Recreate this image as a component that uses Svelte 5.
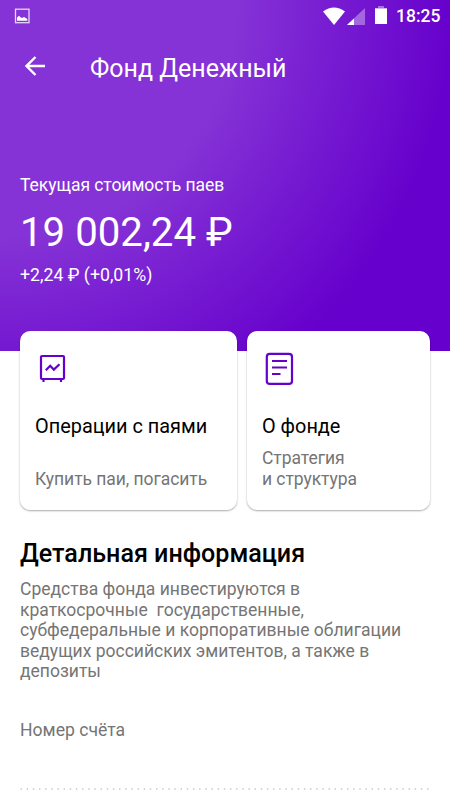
<script lang="ts">
	interface Card {
		icon: 'chart' | 'document';
		title: string;
		lines: string[];
	}

	const fund = {
		name: 'Фонд Денежный',
		value: '19 002,24 ₽',
		change: '+2,24 ₽ (+0,01%)'
	};

	const cards: Card[] = [
		{ icon: 'chart', title: 'Операции с паями', lines: ['Купить паи, погасить'] },
		{ icon: 'document', title: 'О фонде', lines: ['Стратегия', 'и структура'] }
	];

	const description = [
		'Средства фонда инвестируются в',
		'краткосрочные  государственные,',
		'субфедеральные и корпоративные облигации',
		'ведущих российских эмитентов, а также в',
		'депозиты'
	];
</script>

<div class="screen">
	<header class="hero">
		<div class="status-bar">
			<svg class="picture" width="16" height="16" viewBox="0 0 16 16">
				<rect x="1.5" y="1.2" width="13.5" height="13.5" fill="none" stroke="#fff" stroke-opacity="0.8" stroke-width="1.3" />
				<path d="M3 12.8V9.5l2-1.7 1.5 1.4L8 10l2-1 3.3 2v1.8z" fill="#fff" />
			</svg>
			<div class="status-icons">
				<svg class="wifi" width="22" height="18" viewBox="0 0 22 18">
					<path d="M0 4.5Q11-3.5 22 4.5L11 18z" fill="#fff" />
				</svg>
				<svg class="signal" width="18" height="17" viewBox="0 0 18 17">
					<path d="M0 17L18 0v17z" fill="#fff" fill-opacity="0.35" />
					<path d="M0 17l7-6.6V17z" fill="#fff" />
				</svg>
				<svg class="battery" width="12" height="18" viewBox="0 0 12 18">
					<path d="M3 0h6v2h3v1H0V2h3z" fill="#fff" fill-opacity="0.4" />
					<path d="M0 2.5h12V18H0z" fill="#fff" />
				</svg>
				<span class="time">18:25</span>
			</div>
		</div>

		<div class="app-bar">
			<button type="button" class="back" aria-label="Назад">
				<svg width="20" height="20" viewBox="0 0 20 20">
					<path d="M20 10H2M10.5 1L1.5 10l9 9" fill="none" stroke="#fff" stroke-width="2.4" />
				</svg>
			</button>
			<h1>{fund.name}</h1>
		</div>

		<div class="balance">
			<div class="label">Текущая стоимость паев</div>
			<div class="value">{fund.value}</div>
			<div class="change">{fund.change}</div>
		</div>
	</header>

	<div class="cards">
		{#each cards as card}
			<button type="button" class="card">
				<svg class="card-icon" width="32" height="35" viewBox="0 0 32 35" fill="none" stroke="#60c" stroke-width="2.2">
					{#if card.icon === 'chart'}
						<rect x="6" y="5" width="23" height="23" rx="1" />
						<path d="M8.5 28v3M26 28v3M10.8 19.3l4.4-4.5 3.6 3.8 5.7-5.4" />
					{:else}
						<rect x="4.8" y="2.9" width="25.2" height="30" rx="3" />
						<path d="M10 10h15M10 16.5h15M10 22.9h8.5" stroke-width="2" />
					{/if}
				</svg>
				<span class="card-title">{card.title}</span>
				<span class="card-text">
					{#each card.lines as line}
						<span>{line}</span>
					{/each}
				</span>
			</button>
		{/each}
	</div>

	<section class="details">
		<h2>Детальная информация</h2>
		<p class="description">{description.join('\n')}</p>
		<div class="account">Номер счёта</div>
		<svg class="divider" width="410" height="2" viewBox="0 0 410 2">
			<path d="M.5 1h409" stroke="#aaa" stroke-width="1.2" stroke-dasharray="1.4 4.76" />
		</svg>
	</section>
</div>

<style>
	:global(body) {
		margin: 0;
		background: #fff;
	}

	.screen {
		width: 450px;
		height: 800px;
		overflow: hidden;
		background: #fff;
		font-family: Roboto, 'Liberation Sans', sans-serif;
		color: #000;
	}

	.hero {
		box-sizing: border-box;
		height: 351px;
		color: #fff;
		background: radial-gradient(circle at 0 0, #8533d6 235px, #60c 455px);
	}

	.status-bar {
		display: flex;
		align-items: center;
		justify-content: space-between;
		height: 32px;
		padding: 0 10px 0 14px;
	}

	.status-icons {
		display: flex;
		align-items: center;
	}

	.signal {
		margin-left: 2px;
	}

	.battery {
		margin-left: 10px;
		margin-bottom: 2px;
	}

	.time {
		width: 44px;
		margin-left: 9px;
		font-size: 17.5px;
		font-weight: 500;
		line-height: 34px;
		white-space: nowrap;
	}

	.app-bar {
		display: flex;
		align-items: center;
		height: 68px;
		padding-left: 25px;
	}

	.back {
		display: flex;
		width: 20px;
		padding: 0;
		border: none;
		background: none;
		cursor: pointer;
	}

	h1 {
		margin: 5px 0 0 45px;
		font-size: 25px;
		font-weight: 400;
		line-height: 32px;
	}

	.balance {
		padding: 73px 20px 0;
		white-space: nowrap;
	}

	.label {
		font-size: 17.5px;
		line-height: 24px;
		letter-spacing: -0.04px;
	}

	.value {
		margin-top: 11px;
		font-size: 40.2px;
		line-height: 50px;
	}

	.change {
		margin-top: 5px;
		font-size: 17.7px;
		line-height: 24px;
	}

	.cards {
		position: relative;
		display: grid;
		grid-template-columns: 217px 183px;
		gap: 10px;
		height: 179px;
		margin: -20px 20px 0;
	}

	.card {
		display: flex;
		flex-direction: column;
		align-items: flex-start;
		padding: 20px 15px 20px;
		border: none;
		border-radius: 10px;
		background: #fff;
		box-shadow: 0 1px 2px rgba(0, 0, 0, 0.34);
		font-family: inherit;
		text-align: left;
		cursor: pointer;
	}

	.card-title {
		margin-top: 28px;
		font-size: 19.9px;
		line-height: 26px;
		color: #000;
		white-space: nowrap;
	}

	.card-text {
		display: flex;
		flex-direction: column;
		margin-top: auto;
		font-size: 17.5px;
		line-height: 21px;
		letter-spacing: -0.06px;
		color: #757575;
		white-space: nowrap;
	}

	.details {
		padding: 28px 20px 0;
	}

	h2 {
		margin: 0;
		font-size: 25.1px;
		font-weight: 500;
		line-height: 32px;
		white-space: nowrap;
	}

	.description {
		margin: 9px 0 0;
		font-size: 17.5px;
		line-height: 20.6px;
		color: #757575;
		white-space: pre;
	}

	.account {
		margin-top: 36px;
		font-size: 17.6px;
		line-height: 24px;
		color: #757575;
	}

	.divider {
		display: block;
		margin-top: 46px;
	}
</style>
